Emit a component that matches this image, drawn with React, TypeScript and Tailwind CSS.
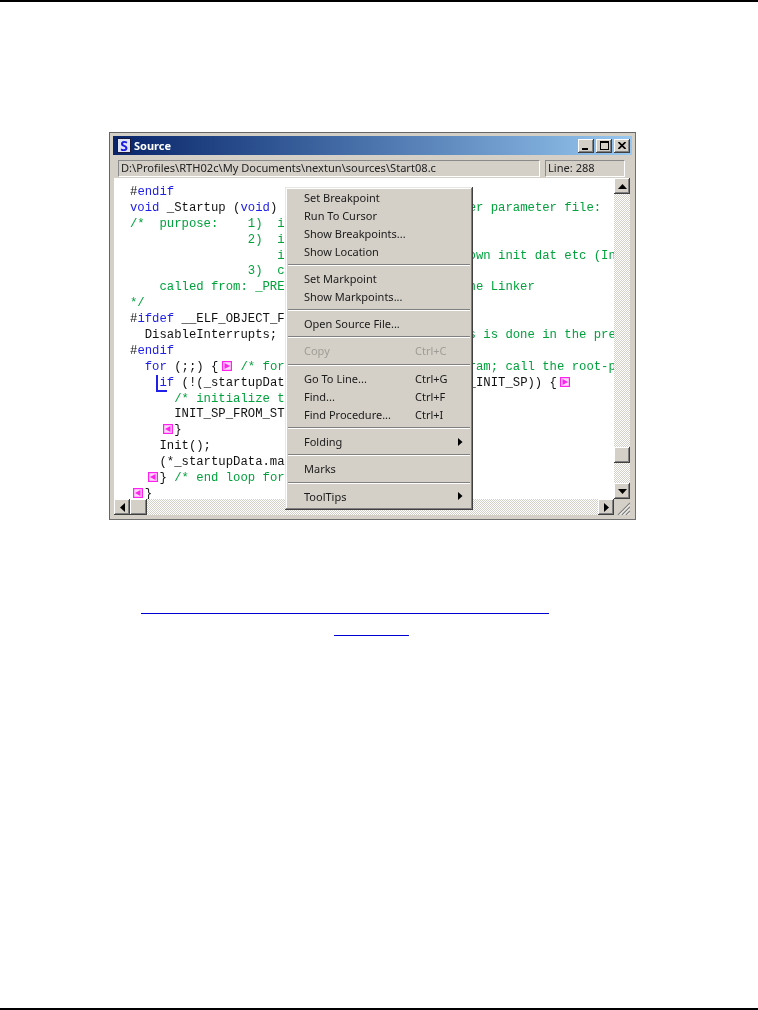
import React from "react";

const raised =
  "bg-[#d4d0c8] shadow-[inset_-1px_-1px_#404040,inset_1px_1px_#ffffff,inset_-2px_-2px_#808080,inset_2px_2px_#d4d0c8]";
const dither =
  "bg-[repeating-conic-gradient(#d4d0c8_0_25%,#ffffff_0_50%)] bg-[length:2px_2px]";

const G = ({ children }: { children: React.ReactNode }) => (
  <span className="text-[#00a23c]">{children}</span>
);
const B = ({ children }: { children: React.ReactNode }) => (
  <span className="text-[#2020e8]">{children}</span>
);

function Box({ dir, className }: { dir: "r" | "l"; className: string }) {
  return (
    <svg
      width="10"
      height="10"
      viewBox="0 0 10 10"
      className={"inline-block align-[-1px] " + className}
    >
      <rect x="0" y="0" width="10" height="10" fill="#ff22ee" />
      <rect x="1.2" y="1.2" width="7.6" height="7.6" fill="#ffd8fa" />
      <polygon
        points={dir === "r" ? "2.5,2 2.5,8 8,5" : "7.5,2 7.5,8 2,5"}
        fill="#ff22ee"
      />
    </svg>
  );
}

function Line({ children }: { children?: React.ReactNode }) {
  return <div className="h-[15.9px] leading-[15.9px] whitespace-pre">{children}</div>;
}

function Arrow({ d }: { d: "up" | "down" | "left" | "right" }) {
  const pts = {
    up: "0,7 9,7 4.5,2",
    down: "0,2 9,2 4.5,7",
    left: "7,0 7,9 2,4.5",
    right: "2,0 2,9 7,4.5",
  }[d];
  return (
    <svg width="9" height="9" viewBox="0 0 9 9">
      <polygon points={pts} fill="#000" />
    </svg>
  );
}

function ScrollBtn({ d }: { d: "up" | "down" | "left" | "right" }) {
  return (
    <div className={"flex items-center justify-center w-[16px] h-[16px] shrink-0 " + raised}>
      <Arrow d={d} />
    </div>
  );
}

function Item({
  label,
  shortcut,
  sub,
  disabled,
}: {
  label: string;
  shortcut?: string;
  sub?: boolean;
  disabled?: boolean;
}) {
  return (
    <div
      className={
        "flex items-center h-[18px] pl-[17px] pr-[8px] " +
        (disabled ? "text-[#a09d96]" : "text-[#1a1a1a]")
      }
    >
      <span className="w-[111px] whitespace-pre">{label}</span>
      {shortcut && <span className="whitespace-pre">{shortcut}</span>}
      {sub && (
        <svg width="5" height="8" viewBox="0 0 5 8" className="ml-auto">
          <polygon points="0,0 0,8 4.5,4" fill="#000" />
        </svg>
      )}
    </div>
  );
}

const Sep = () => (
  <div className="h-[9.33px] flex flex-col justify-center px-[1px]">
    <div className="h-px bg-[#808080]" />
    <div className="h-px bg-white" />
  </div>
);

function Win({ children }: { children: React.ReactNode }) {
  return (
    <div className={"flex items-center justify-center w-[16px] h-[14px] " + raised}>{children}</div>
  );
}

export default function App() {
  return (
    <div className="relative w-[758px] h-[1010px] bg-white flex flex-col overflow-hidden font-['Noto_Sans',sans-serif]">
      <div className="h-[2px] bg-black shrink-0" />

      <div className="relative mt-[130px] ml-[109px] w-[527px] h-[388px] shrink-0 bg-[#d4d0c8] border border-[#666] border-r-[#707070] border-b-[#707070] p-[3px] blur-[0.35px]">
        {/* title bar */}
        <div className="h-[19px] flex items-center pl-[4px] pr-[2px] bg-gradient-to-r from-[#0a246a] to-[#98c8f0]">
          <div className="w-[14px] h-[15px] bg-[#dfe4f4] border border-[#1a1a40] flex items-center justify-center text-[#1a1ae0] text-[14px] font-bold leading-none">
            S
          </div>
          <span className="ml-[3px] text-white text-[11px] font-bold leading-none">Source</span>
          <div className="ml-auto flex items-center">
            <Win>
              <div className="w-[6px] h-[2px] bg-black mt-[7px] mr-[2px]" />
            </Win>
            <div className="w-[2px]" />
            <Win>
              <div className="w-[9px] h-[9px] border border-black border-t-2" />
            </Win>
            <div className="w-[2px]" />
            <Win>
              <svg width="8" height="7" viewBox="0 0 8 7">
                <path d="M0.5 0 L7.5 7 M7.5 0 L0.5 7" stroke="#000" strokeWidth="1.6" />
              </svg>
            </Win>
          </div>
        </div>

        {/* path bar */}
        <div className="flex h-[23px] items-center pl-[5px] pr-[7px] gap-[5px] text-[11.1px] text-[#222]">
          <div className="w-[422px] h-[17px] mt-[4px] flex items-center pl-[2px] border border-[#8a8a8a] border-r-white border-b-white whitespace-pre">
            D:\Profiles\RTH02c\My Documents\nextun\sources\Start08.c
          </div>
          <div className="w-[80px] h-[17px] mt-[4px] flex items-center pl-[2px] border border-[#8a8a8a] border-r-white border-b-white whitespace-pre">
            Line: 288
          </div>
        </div>

        {/* editor */}
        <div className="ml-[1px] mr-[2px] flex flex-col">
          <div className="flex h-[321px]">
            <div className="flex-1 min-w-0 bg-white overflow-hidden pl-[16px] pt-[7px] font-['Liberation_Mono',monospace] text-[12.28px] text-[#111]">
              <Line>#<B>endif</B></Line>
              <Line><B>void</B> _Startup (<B>void</B>){"                          "}<G>er parameter file:</G></Line>
              <Line><G>/*  purpose:    1)  i</G></Line>
              <Line><G>{"                2)  i"}</G></Line>
              <Line><G>{"                    i                         own init dat etc (In"}</G></Line>
              <Line><G>{"                3)  c"}</G></Line>
              <Line><G>{"    called from: _PRE                         ne Linker"}</G></Line>
              <Line><G>*/</G></Line>
              <Line>#<B>ifdef</B> __ELF_OBJECT_F</Line>
              <Line>{"  DisableInterrupts;                          "}<G>s is done in the pre</G></Line>
              <Line>#<B>endif</B></Line>
              <Line>
                {"  "}<B>for</B>{" (;;) {"}
                <Box dir="r" className="ml-[3.6px] mr-[8.5px]" />
                <G>{"/* for                         ram; call the root-p"}</G>
              </Line>
              <Line>
                {"    "}
                <span className="relative text-[#2020e8]">
                  if
                  <span className="absolute left-[-3px] top-[-1px] bottom-[-2px] w-[11px] border-l-2 border-b-2 border-[#2020e8]" />
                </span>
                {" (!(_startupDat                         _INIT_SP)) {"}
                <Box dir="r" className="ml-[3.5px]" />
              </Line>
              <Line><G>{"      /* initialize t"}</G></Line>
              <Line>{"      INIT_SP_FROM_ST"}</Line>
              <Line><Box dir="l" className="ml-[32.7px] mr-[1.5px]" />{"}"}</Line>
              <Line>{"    Init();"}</Line>
              <Line>{"    (*_startupData.ma"}</Line>
              <Line><Box dir="l" className="ml-[18px] mr-[1.5px]" />{"} "}<G>/* end loop for</G></Line>
              <Line><Box dir="l" className="ml-[3px] mr-[1.7px]" />{"}"}</Line>
            </div>
            <div className={"w-[16px] flex flex-col shrink-0 " + dither}>
              <ScrollBtn d="up" />
              <div className="h-[253px]" />
              <div className={"w-[16px] h-[16px] shrink-0 " + raised} />
              <div className="flex-1" />
              <ScrollBtn d="down" />
            </div>
          </div>
          <div className={"flex h-[16px] " + dither}>
            <ScrollBtn d="left" />
            <div className={"w-[17px] h-[16px] " + raised} />
            <div className="flex-1" />
            <ScrollBtn d="right" />
            <div className="w-[16px] h-[16px] bg-[#d4d0c8] flex items-end justify-end">
              <svg width="14" height="14" viewBox="0 0 14 14">
                <path d="M2 14 L14 2 M6 14 L14 6 M10 14 L14 10" stroke="#808080" strokeWidth="1.2" />
                <path d="M3.5 14 L14 3.5 M7.5 14 L14 7.5 M11.5 14 L14 11.5" stroke="#ffffff" strokeWidth="1" />
              </svg>
            </div>
          </div>
        </div>

        {/* context menu */}
        <div className="absolute left-[175px] top-[54px] w-[188px] h-[323px] pt-[1px] px-[2px] text-[11px] leading-none bg-[#d4d0c8] shadow-[inset_-1px_-1px_#404040,inset_1px_1px_#e8e6e0,inset_-2px_-2px_#808080,inset_2px_2px_#ffffff]">
          <Item label="Set Breakpoint" />
          <Item label="Run To Cursor" />
          <Item label="Show Breakpoints..." />
          <Item label="Show Location" />
          <Sep />
          <Item label="Set Markpoint" />
          <Item label="Show Markpoints..." />
          <Sep />
          <Item label="Open Source File..." />
          <Sep />
          <Item label="Copy" shortcut="Ctrl+C" disabled />
          <Sep />
          <Item label="Go To Line..." shortcut="Ctrl+G" />
          <Item label="Find..." shortcut="Ctrl+F" />
          <Item label="Find Procedure..." shortcut="Ctrl+I" />
          <Sep />
          <Item label="Folding" sub />
          <Sep />
          <Item label="Marks" />
          <Sep />
          <Item label="ToolTips" sub />
        </div>
      </div>

      <div className="mt-[93px] ml-[141px] w-[408px] h-px bg-[#0000d0] shrink-0" />
      <div className="mt-[21px] ml-[334px] w-[75px] h-px bg-[#0000d0] shrink-0" />
      <div className="mt-auto h-[2px] bg-black shrink-0" />
    </div>
  );
}
